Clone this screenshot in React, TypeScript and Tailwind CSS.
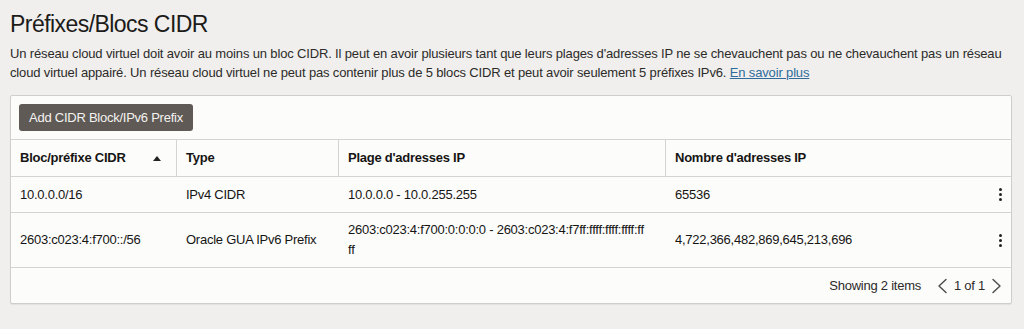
import React from "react";

type Row = {
  cidr: string;
  type: string;
  range: React.ReactNode;
  count: string;
  tall?: boolean;
};

const rows: Row[] = [
  {
    cidr: "10.0.0.0/16",
    type: "IPv4 CIDR",
    range: "10.0.0.0 - 10.0.255.255",
    count: "65536",
  },
  {
    cidr: "2603:c023:4:f700::/56",
    type: "Oracle GUA IPv6 Prefix",
    range: (
      <>
        2603:c023:4:f700:0:0:0:0 - 2603:c023:4:f7ff:ffff:ffff:ffff:ff
        <br />
        ff
      </>
    ),
    count: "4,722,366,482,869,645,213,696",
    tall: true,
  },
];

function Kebab() {
  return (
    <div className="flex flex-col items-center gap-[2px] pr-[9px]">
      <span className="block h-[3px] w-[3px] rounded-full bg-[#222]" />
      <span className="block h-[3px] w-[3px] rounded-full bg-[#222]" />
      <span className="block h-[3px] w-[3px] rounded-full bg-[#222]" />
    </div>
  );
}

function Chevron({ dir }: { dir: "left" | "right" }) {
  return (
    <svg width="11" height="16" viewBox="0 0 11 16" fill="none">
      <polyline
        points={dir === "left" ? "9,1.5 2,8 9,14.5" : "2,1.5 9,8 2,14.5"}
        stroke="#4a4a4a"
        strokeWidth="1.4"
        strokeLinejoin="round"
        strokeLinecap="round"
      />
    </svg>
  );
}

export default function App() {
  return (
    <div className="min-h-[329px] w-[1024px] bg-[#f0efed] px-[10px] pb-[25px] font-['Liberation_Sans',Arial,sans-serif] text-[#161513]">
      <h1 className="pt-[9px] text-[23px] leading-[30px] tracking-[-0.55px] text-[#1c1b19]">Préfixes/Blocs CIDR</h1>
      <p className="mt-[5px] whitespace-nowrap text-[13px] leading-[19px] tracking-[-0.15px] text-[#2c2b29]">
        Un réseau cloud virtuel doit avoir au moins un bloc CIDR. Il peut en avoir plusieurs tant que leurs plages
        d'adresses IP ne se chevauchent pas ou ne chevauchent pas un réseau
        <br />
        cloud virtuel appairé. Un réseau cloud virtuel ne peut pas contenir plus de 5 blocs CIDR et peut avoir
        seulement 5 préfixes IPv6.{" "}
        <a href="#" className="text-[#2f6c9c] underline">
          En savoir plus
        </a>
      </p>

      <div className="mt-[13px] w-[1002px] rounded-[2px] border border-[#cfcecb] bg-[#fcfcfb] text-[13px] tracking-[-0.25px] shadow-[0_1px_1px_rgba(0,0,0,0.06)]">
        <div className="p-[8px]">
          <button className="h-[27px] rounded-[3px] bg-[#5f5a55] px-[10px] text-[13px] text-[#f4f3f1]">
            Add CIDR Block/IPv6 Prefix
          </button>
        </div>

        <div className="grid grid-cols-[166px_162px_327px_1fr]">
          <div className="flex h-[37px] items-center justify-between border-t border-r border-[#d5d4d2] px-[9px] font-bold">
            <span>Bloc/préfixe CIDR</span>
            <svg width="8" height="5" viewBox="0 0 8 5" className="mr-[6px]">
              <polygon points="0,5 4,0 8,5" fill="#222" />
            </svg>
          </div>
          <div className="flex h-[37px] items-center border-t border-r border-[#d5d4d2] px-[9px] font-bold">Type</div>
          <div className="flex h-[37px] items-center border-t border-r border-[#d5d4d2] px-[9px] font-bold">
            Plage d'adresses IP
          </div>
          <div className="flex h-[37px] items-center border-t border-[#d5d4d2] px-[9px] font-bold">
            Nombre d'adresses IP
          </div>

          {rows.map((r) => (
            <React.Fragment key={r.cidr}>
              <div
                className={`flex items-center border-t border-[#d5d4d2] px-[9px] ${r.tall ? "h-[55px]" : "h-[36px]"}`}
              >
                {r.cidr}
              </div>
              <div
                className={`flex items-center border-t border-[#d5d4d2] px-[9px] ${r.tall ? "h-[55px]" : "h-[36px]"}`}
              >
                {r.type}
              </div>
              <div
                className={`flex items-center border-t border-[#d5d4d2] pl-[9px] leading-[20px] ${r.tall ? "h-[55px]" : "h-[36px]"}`}
              >
                <span className="whitespace-nowrap">{r.range}</span>
              </div>
              <div
                className={`flex items-center justify-between border-t border-[#d5d4d2] pl-[9px] ${r.tall ? "h-[55px]" : "h-[36px]"}`}
              >
                <span>{r.count}</span>
                <Kebab />
              </div>
            </React.Fragment>
          ))}
        </div>

        <div className="flex h-[36px] items-center justify-end border-t border-[#d5d4d2] pr-[9px] text-[#2c2b29]">
          <span>Showing 2 items</span>
          <span className="ml-[16px] flex items-center gap-[6px]">
            <Chevron dir="left" />
            <span>1 of 1</span>
            <Chevron dir="right" />
          </span>
        </div>
      </div>
    </div>
  );
}
